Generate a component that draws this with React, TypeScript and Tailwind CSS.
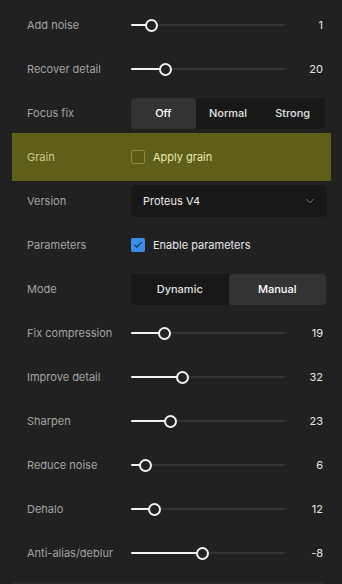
import { Check, ChevronDown } from "lucide-react";

const font = { fontFamily: "Inter, 'Noto Sans', sans-serif" };

function Label({ children }: { children: React.ReactNode }) {
  return <span className="w-[104px] shrink-0 text-[11px] text-[#a3a3a3]">{children}</span>;
}

function Slider({ label, pos, value }: { label: string; pos: number; value: string }) {
  return (
    <div className="flex h-11 items-center pl-[27px]">
      <Label>{label}</Label>
      <div className="relative h-[12px] w-[154px]">
        <div className="absolute left-0 right-0 top-[5px] h-[2px] rounded-full bg-[#333333]" />
        <div className="absolute left-0 top-[5px] h-[2px] rounded-full bg-[#f2f2f2]" style={{ width: pos }} />
        <div
          className="absolute top-0 h-[13px] w-[13px] rounded-full border-2 border-[#f2f2f2] bg-[#222222]"
          style={{ left: pos - 6.5, top: -0.5 }}
        />
      </div>
      <span className="w-[38px] text-right text-[11px] text-[#e6e6e6]">{value}</span>
    </div>
  );
}

function Segmented({ items, active, width }: { items: string[]; active: number; width: number }) {
  return (
    <div className="flex h-[31px] overflow-hidden rounded-[4px] bg-[#181818]" style={{ width }}>
      {items.map((it, i) => (
        <div
          key={it}
          className={`flex flex-1 items-center justify-center text-[11px] font-medium ${
            i === active ? "rounded-[3px] bg-[#333333] text-white" : "text-[#e0e0e0]"
          }`}
        >
          {it}
        </div>
      ))}
    </div>
  );
}

export default function App() {
  return (
    <div className="h-[584px] w-[342px] overflow-hidden bg-[#212121] pt-[3px]" style={font}>
      <Slider label="Add noise" pos={20} value="1" />
      <Slider label="Recover detail" pos={34} value="20" />
      <div className="flex h-11 items-center pl-[27px]">
        <Label>Focus fix</Label>
        <Segmented items={["Off", "Normal", "Strong"]} active={0} width={194} />
      </div>
      <div className="-my-[2px] ml-[12px] flex h-[48px] w-[319px] items-center bg-[#5e5f18] pl-[15px]">
        <span className="w-[104px] shrink-0 text-[11px] text-[#c9c98a]">Grain</span>
        <div className="h-[14px] w-[14px] rounded-[2px] border border-[#8b8b45] bg-[#5a5b14]" />
        <span className="ml-[8px] text-[11px] text-[#e8e8b0]">Apply grain</span>
      </div>
      <div className="flex h-11 items-center pl-[27px]">
        <Label>Version</Label>
        <div className="flex h-[32px] w-[196px] items-center justify-between rounded-[5px] bg-[#181818] pl-[12px] pr-[10px]">
          <span className="text-[11px] text-[#ececec]">Proteus V4</span>
          <ChevronDown className="h-[14px] w-[14px] text-[#8a8a8a]" strokeWidth={1.5} />
        </div>
      </div>
      <div className="flex h-11 items-center pl-[27px]">
        <Label>Parameters</Label>
        <div className="flex h-[14px] w-[14px] items-center justify-center rounded-[2px] bg-[#3a8ee6]">
          <Check className="h-[10px] w-[10px] text-[#10243a]" strokeWidth={2.5} />
        </div>
        <span className="ml-[8px] text-[11px] text-[#e6e6e6]">Enable parameters</span>
      </div>
      <div className="flex h-11 items-center pl-[27px]">
        <Label>Mode</Label>
        <Segmented items={["Dynamic", "Manual"]} active={1} width={195} />
      </div>
      <Slider label="Fix compression" pos={33} value="19" />
      <Slider label="Improve detail" pos={51} value="32" />
      <Slider label="Sharpen" pos={39} value="23" />
      <Slider label="Reduce noise" pos={14} value="6" />
      <Slider label="Dehalo" pos={23} value="12" />
      <Slider label="Anti-alias/deblur" pos={71} value="-8" />
      <div className="ml-[10px] mt-[7px] h-[6px] w-[315px] rounded-t-[4px] bg-[#292929]" />
    </div>
  );
}
